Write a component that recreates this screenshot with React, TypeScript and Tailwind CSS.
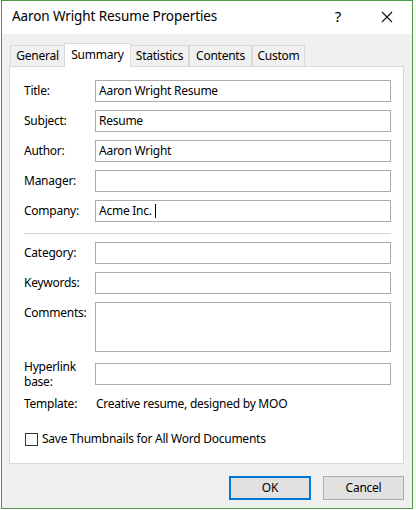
const FONT = "font-['Noto_Sans','Liberation_Sans',sans-serif] tracking-[-0.25px]";

function Field(props: { label: string; value?: string; caret?: boolean }) {
  return (
    <div className="flex items-center h-[22px]">
      <div className="w-[71px] text-[12px]">{props.label}</div>
      <div className="flex-1 h-[22px] border border-[#acacac] bg-white flex items-center pl-[3px] text-[12px]">
        <span className="whitespace-pre">{props.value}</span>
        {props.caret && <span className="w-px h-[14px] bg-black" />}
      </div>
    </div>
  );
}

function Tab(props: { label: string; width: string; active?: boolean }) {
  if (props.active) {
    return (
      <div
        className={`${props.width} h-[24px] -mb-px -mx-px relative z-10 bg-white border border-b-0 border-[#d9d9d9] flex justify-center pt-[2px] text-[12px]`}
      >
        {props.label}
      </div>
    );
  }
  return (
    <div
      className={`${props.width} h-[21px] bg-[#f0f0f0] border border-b-0 border-[#d9d9d9] flex items-center justify-center text-[12px]`}
    >
      {props.label}
    </div>
  );
}

export default function App() {
  return (
    <div className={`w-[416px] h-[510px] bg-white text-black ${FONT}`}>
      <div className="ml-px w-[412px] h-[509px] border border-[#4b9a44] bg-[#f0f0f0] flex flex-col">
        <div className="h-[33px] bg-white flex items-center pl-[10px] pr-[19px]">
          <span className="text-[13.5px] tracking-[-0.1px] flex-1 pb-[2px]">Aaron Wright Resume Properties</span>
          <span className="text-[15px] mr-[40px] pb-[2px]">?</span>
          <svg width="12" height="12" viewBox="0 0 12 12" className="mb-[1px]">
            <path d="M1 1L11 11M11 1L1 11" stroke="#111" strokeWidth="1.1" fill="none" />
          </svg>
        </div>

        <div className="flex flex-col pl-[7px] pr-[8px] pt-[9px]">
          <div className="flex items-end h-[23px] pl-px">
            <Tab label="General" width="w-[55px]" />
            <Tab label="Summary" width="w-[67px]" active />
            <Tab label="Statistics" width="w-[59px]" />
            <Tab label="Contents" width="w-[63px]" />
            <Tab label="Custom" width="w-[53px]" />
          </div>

          <div className="h-[398px] border border-[#d9d9d9] bg-white pl-[14px] pr-[12px] pt-[13px] flex flex-col">
            <div className="flex flex-col gap-[8px]">
              <Field label="Title:" value="Aaron Wright Resume" />
              <Field label="Subject:" value="Resume" />
              <Field label="Author:" value="Aaron Wright" />
              <Field label="Manager:" />
              <Field label="Company:" value="Acme Inc. " caret />
            </div>

            <div className="h-px bg-[#d5d5d5] mt-[11px] mb-[8px]" />

            <div className="flex flex-col gap-[8px]">
              <Field label="Category:" />
              <Field label="Keywords:" />
              <div className="flex items-start">
                <div className="w-[71px] h-[22px] flex items-center text-[12px]">Comments:</div>
                <div className="flex-1 h-[50px] border border-[#acacac] bg-white" />
              </div>
            </div>

            <div className="flex items-center h-[22px] mt-[11px]">
              <div className="w-[71px] text-[12px] leading-[15px]">
                Hyperlink
                <br />
                base:
              </div>
              <div className="flex-1 h-[22px] border border-[#acacac] bg-white" />
            </div>

            <div className="flex items-center h-[22px] mt-[8px] text-[12px]">
              <div className="w-[72px]">Template:</div>
              <div>Creative resume, designed by MOO</div>
            </div>

            <div className="flex items-center h-[22px] mt-[13px] pl-px text-[12px]">
              <div className="w-[13px] h-[13px] border border-[#333] bg-white mr-[4px]" />
              <span>Save Thumbnails for All Word Documents</span>
            </div>
          </div>

          <div className="flex justify-end gap-[12px] mt-[12px]">
            <div className="w-[82px] h-[24px] bg-[#e1e1e1] border-2 border-[#0078d7] flex items-center justify-center text-[12px]">
              OK
            </div>
            <div className="w-[81px] h-[24px] bg-[#e1e1e1] border border-[#adadad] flex items-center justify-center text-[12px]">
              Cancel
            </div>
          </div>
        </div>
      </div>
    </div>
  );
}
